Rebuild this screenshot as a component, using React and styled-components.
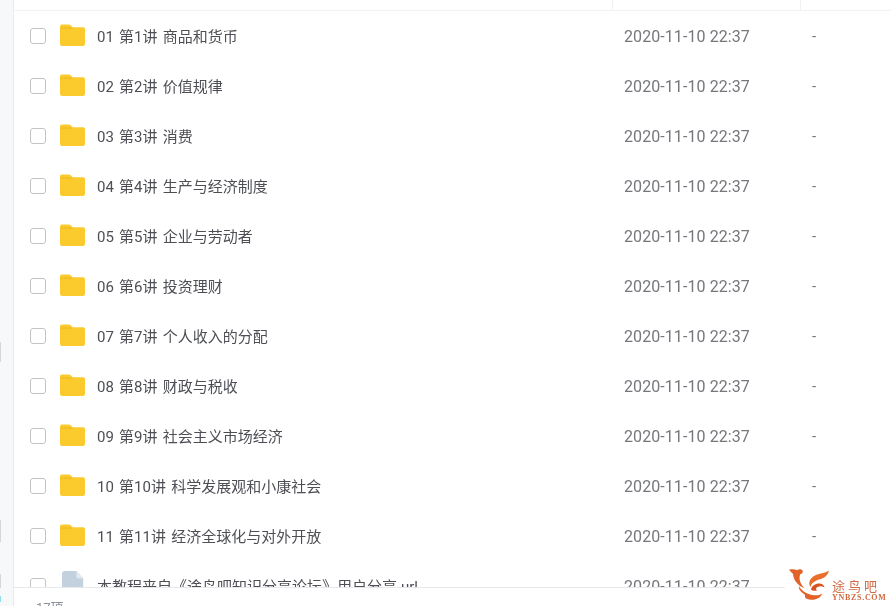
import React from "react";
import styled, { createGlobalStyle } from "styled-components";

const GlobalStyle = createGlobalStyle`
  html, body {
    margin: 0;
    padding: 0;
    background: #fff;
    overflow: hidden;
  }
`;

const Page = styled.div`
  position: relative;
  display: flex;
  width: 891px;
  height: 606px;
  overflow: hidden;
  font-family: Roboto, "Noto Sans CJK SC", sans-serif;
  font-size: 15px;
  color: #4d4f55;
  filter: blur(0.3px);
`;

const Sidebar = styled.aside`
  width: 13px;
  flex: none;
  display: flex;
  flex-direction: column;
  align-items: flex-start;
  background: #f7f8fa;
  border-right: 1px solid #e8eaee;
`;

const SideMark = styled.span`
  width: 1px;
  height: ${(p) => p.$h}px;
  margin-top: ${(p) => p.$top}px;
  background: ${(p) => p.$color || "#d4d6da"};
`;

const Main = styled.main`
  flex: 1;
  min-width: 0;
  display: flex;
  flex-direction: column;
`;

const Columns = styled.div`
  display: grid;
  grid-template-columns: 599px 188px 1fr;
  align-items: center;
`;

const HeaderRow = styled(Columns)`
  height: 10px;
  flex: none;
  border-bottom: 1px solid #f2f3f5;
  align-items: stretch;
`;

const HeaderCell = styled.div`
  border-right: ${(p) => (p.$last ? "none" : "1px solid #f0f1f3")};
`;

const List = styled.div`
  flex: 1;
  min-height: 0;
  overflow: hidden;
`;

const Row = styled(Columns)`
  height: 50px;
`;

const NameCell = styled.div`
  display: flex;
  align-items: center;
  padding-left: 16px;
  min-width: 0;
`;

const Checkbox = styled.span`
  width: 14px;
  height: 14px;
  flex: none;
  border: 1.5px solid #c2c3c6;
  border-radius: 3px;
  background: #fff;
`;

const IconSlot = styled.span`
  display: flex;
  flex: none;
  width: 25px;
  justify-content: center;
  margin: 0 12px 2px 14px;
`;

const FileName = styled.span`
  white-space: nowrap;
  word-spacing: 1.5px;
  margin-bottom: 2px;
`;

const DateCell = styled.div`
  padding-left: 11px;
  color: #75777c;
  font-size: 16px;
  letter-spacing: 0.08px;
  white-space: nowrap;
`;

const SizeCell = styled.div`
  padding-left: 11px;
  color: #75777c;
`;

const Footer = styled.footer`
  box-sizing: border-box;
  height: 19px;
  flex: none;
  overflow: hidden;
  border-top: 1px solid #e6e8eb;
  padding: 11px 0 0 22px;
  background: #fff;
  color: #8a8f98;
  font-size: 13px;
  line-height: 18px;
`;

const Watermark = styled.div`
  position: absolute;
  left: 785px;
  top: 568px;
  display: flex;
  align-items: flex-start;
  padding: 0 7px 0 3px;
  background: #fff;
  border-radius: 6px;
`;

const WatermarkText = styled.div`
  display: flex;
  flex-direction: column;
  margin-top: 12px;
  color: #cf6a42;
`;

const WatermarkTitle = styled.span`
  font-size: 13px;
  line-height: 14px;
  letter-spacing: 3px;
`;

const WatermarkSub = styled.span`
  font-family: "Liberation Serif", serif;
  font-size: 8px;
  line-height: 8px;
  font-weight: 700;
  letter-spacing: 0.7px;
`;

const FolderIcon = () => (
  <svg width="25" height="22" viewBox="0 0 26 23" preserveAspectRatio="none">
    <path
      d="M2 0.5h7c1 0 1.7.4 2.3 1.1L13 3.5h11c1.100 0 2 .9 2 2V21c0 1.100-.9 2-2 2H2c-1.100 0-2-.9-2-2V2.500c0-1.100.9-2 2-2z"
      fill="#fbcb2e"
    />
    <path d="M0 5.500c0-1.100.9-2 2-2h11L13 5.500z" fill="#f2bf24" />
  </svg>
);

const LinkFileIcon = () => (
  <svg width="22" height="28" viewBox="0 0 26 30" preserveAspectRatio="none">
    <path
      d="M3 0h14l8 8v19c0 1.600-1.300 3-3 3H3c-1.600 0-3-1.400-3-3V3c0-1.600 1.400-3 3-3z"
      fill="#c3d0dd"
    />
    <path d="M17 0l8 8h-6c-1.100 0-2-.9-2-2z" fill="#e3e9ef" />
  </svg>
);

const BirdLogo = () => (
  <svg width="44" height="33" viewBox="0 0 44 37" preserveAspectRatio="none">
    <path
      d="M1 2c3-.8 6-.6 8 .4 2-1.400 4.500-1.200 5.500.5 1 1.800-.3 3.800-2.300 4.200-1.700 5.300.2 11.300 4.300 15.700-6.500-2.800-11-8.800-11.500-16C4 5.500 2.500 4 1 2z"
      fill="#e2622a"
    />
    <path
      d="M17 30c-4-2.500-6.500-6.500-6.200-9.500 3 5 7 8 12 9.500 5 1.300 9 .5 11.500-1.500-1.500 5-7 8-13 6.800-1.600-.3-3-.9-4.300-2.300z"
      fill="#e2622a"
    />
    <path
      d="M41 3c-1 5-4.500 8-9 9.500-5 1.700-9 4.500-9.500 9-3-5.500 0-11.500 6-14C33 5.800 37.500 5.200 41 3z"
      fill="#e96f2e"
    />
    <path
      d="M23 24c1-4.500 5-7 9-6.500 2.500.3 4 2 4.500 4.500-2-1.700-4.500-2-6.500-1-2.200 1-2.500 3-1 4.500-2.300.4-4.500 0-6-1.500z"
      fill="#d9531f"
    />
  </svg>
);

const folders = [
  "01 第1讲 商品和货币",
  "02 第2讲 价值规律",
  "03 第3讲 消费",
  "04 第4讲 生产与经济制度",
  "05 第5讲 企业与劳动者",
  "06 第6讲 投资理财",
  "07 第7讲 个人收入的分配",
  "08 第8讲 财政与税收",
  "09 第9讲 社会主义市场经济",
  "10 第10讲 科学发展观和小康社会",
  "11 第11讲 经济全球化与对外开放",
];

const FileRow = ({ name, icon }) => (
  <Row>
    <NameCell>
      <Checkbox />
      <IconSlot>{icon}</IconSlot>
      <FileName>{name}</FileName>
    </NameCell>
    <DateCell>2020-11-10 22:37</DateCell>
    <SizeCell>-</SizeCell>
  </Row>
);

export default function App() {
  return (
    <Page>
      <GlobalStyle />
      <Sidebar>
        <SideMark $top={342} $h={20} />
        <SideMark $top={158} $h={22} />
        <SideMark $top={32} $h={14} />
        <SideMark $top={8} $h={6} $color="#8fdcec" />
      </Sidebar>
      <Main>
        <HeaderRow>
          <HeaderCell />
          <HeaderCell />
          <HeaderCell $last />
        </HeaderRow>
        <List>
          {folders.map((name) => (
            <FileRow key={name} name={name} icon={<FolderIcon />} />
          ))}
          <FileRow
            name="本教程来自《途鸟吧知识分享论坛》用户分享.url"
            icon={<LinkFileIcon />}
          />
        </List>
        <Footer>17项</Footer>
      </Main>
      <Watermark>
        <BirdLogo />
        <WatermarkText>
          <WatermarkTitle>途鸟吧</WatermarkTitle>
          <WatermarkSub>YNBZS.COM</WatermarkSub>
        </WatermarkText>
      </Watermark>
    </Page>
  );
}
